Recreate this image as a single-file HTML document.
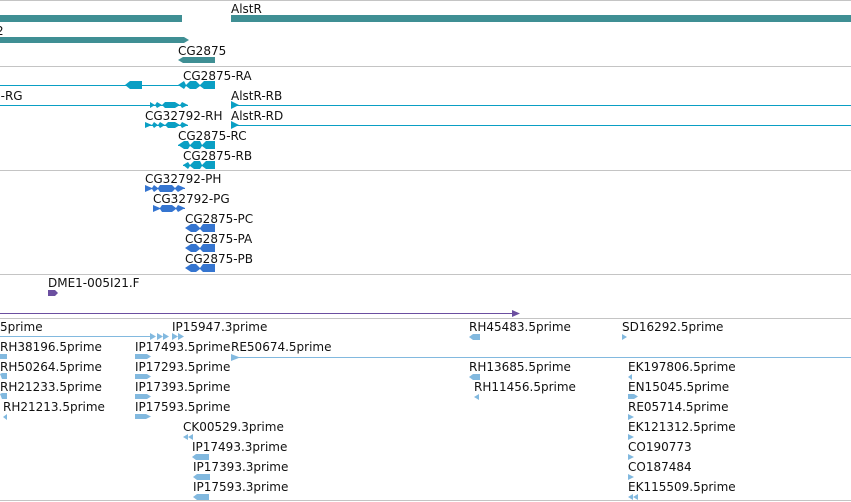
<!DOCTYPE html>
<html><head><meta charset="utf-8"><style>
html,body{margin:0;padding:0;background:#fff;}
body{width:851px;height:502px;position:relative;overflow:hidden;font-family:"DejaVu Sans","Liberation Sans",sans-serif;font-size:12px;color:#111;}
.t{position:absolute;line-height:12px;white-space:nowrap;margin-top:1px;}
.h{position:absolute;left:0;width:851px;height:1px;background:#c4c4c4;}
svg{position:absolute;left:0;top:0;}
</style></head><body>
<div class="h" style="top:0"></div>
<div class="h" style="top:66px"></div>
<div class="h" style="top:170px"></div>
<div class="h" style="top:274px"></div>
<div class="h" style="top:318px"></div>
<div class="h" style="top:500px"></div>

<svg width="851" height="502">
<g fill="#3f8f94">
<rect x="0" y="15" width="182" height="7"/>
<rect x="231" y="15" width="620" height="7"/>
<polygon points="0,37 184,37 189,40 184,43 0,43"/>
<polygon points="178,60 183,57 215,57 215,63 183,63"/>
</g>
<g fill="#0a9fc4" stroke="#0a9fc4">
<line x1="0" y1="85.5" x2="215" y2="85.5" stroke-width="1"/>
<polygon points="125,85 130,81 142,81 142,89 130,89" stroke="none"/>
<polygon points="178,85 184,81 186,85 190,81 196,81 200,85 204,81 215,81 215,89 204,89 200,86 196,89 190,89 186,86 184,89" stroke="none"/>
<line x1="0" y1="105.5" x2="188" y2="105.5"/>
<polygon points="150,102 155,105 157,102 162,105 165,102 175,102 180,105 182,102 188,105 182,108 180,105 175,108 165,108 162,105 157,108 155,105 150,108" stroke="none"/>
<line x1="231" y1="105.5" x2="851" y2="105.5"/>
<polygon points="231,101 239,105 231,109" stroke="none"/>
<line x1="145" y1="125.5" x2="188" y2="125.5"/>
<polygon points="145,122 152,125 154,122 158,125 160,122 165,125 168,122 175,122 180,125 182,122 188,125 182,128 180,125 175,128 168,128 165,125 160,128 158,125 154,128 152,125 145,128" stroke="none"/>
<line x1="231" y1="125.5" x2="851" y2="125.5"/>
<polygon points="231,121 239,125 231,129" stroke="none"/>
<line x1="178" y1="145.5" x2="215" y2="145.5"/>
<polygon points="178,145 184,141 188,141 190,145 194,141 200,141 202,145 206,141 215,141 215,149 206,149 202,146 200,149 194,149 190,146 188,149 184,149" stroke="none"/>
<line x1="183" y1="165.5" x2="215" y2="165.5"/>
<polygon points="183,165 188,162 190,165 194,161 200,161 202,165 206,161 215,161 215,169 206,169 202,166 200,169 194,169 190,166 188,169" stroke="none"/>
</g>
<g fill="#3575d0" stroke="#3575d0">
<line x1="145" y1="188.5" x2="185" y2="188.5"/>
<polygon points="145,185 152,188 154,185 158,188 160,185 165,185 172,185 175,188 178,185 185,188 178,192 175,189 172,192 165,192 160,192 158,189 154,192 152,189 145,192" stroke="none"/>
<line x1="153" y1="208.5" x2="185" y2="208.5"/>
<polygon points="153,205 160,208 162,205 166,205 172,205 176,208 178,205 185,208 178,212 176,209 172,212 166,212 162,212 160,209 153,212" stroke="none"/>
<polygon points="185,228 191,224 196,224 200,228 203,224 215,224 215,232 203,232 200,229 196,232 191,232" stroke="none"/>
<polygon points="185,248 191,244 196,244 200,248 203,244 215,244 215,252 203,252 200,249 196,252 191,252" stroke="none"/>
<polygon points="185,268 191,264 196,264 200,268 203,264 215,264 215,272 203,272 200,269 196,272 191,272" stroke="none"/>
</g>
<g fill="#6b4fa0">
<polygon points="48,290 55,290 58,293 55,296 48,296"/>
<rect x="0" y="313" width="512" height="1"/>
<polygon points="512,310 520,313.5 512,317"/>
</g>
<g fill="#82b9df" stroke="#82b9df">
<line x1="0" y1="336.5" x2="150" y2="336.5"/>
<polygon points="150,333 156,336.5 150,340" stroke="none"/>
<polygon points="157,333 163,336.5 157,340" stroke="none"/>
<polygon points="163,333 169,336.5 163,340" stroke="none"/>
<polygon points="172,333 178,336.5 172,340" stroke="none"/>
<polygon points="178,333 184,336.5 178,340" stroke="none"/>
<line x1="231" y1="357.5" x2="851" y2="357.5"/>
<polygon points="231,354 240,357.5 231,361" stroke="none"/>
<polygon points="469,337 473,334 480,334 480,340 473,340" stroke="none"/>
<polygon points="622,334 627,337 622,340" stroke="none"/>
<rect x="0" y="354" width="7" height="5" stroke="none"/>
<polygon points="135,354 147,354 151,356.5 147,359 135,359" stroke="none"/>
<polygon points="0,374 2,373 7,373 7,379 2,379" stroke="none"/>
<polygon points="135,374 147,374 151,376.5 147,379 135,379" stroke="none"/>
<polygon points="469,377 473,374 480,374 480,380 473,380" stroke="none"/>
<polygon points="628,377 632,374 632,380" stroke="none"/>
<polygon points="0,394 2,393 7,393 7,399 2,399" stroke="none"/>
<polygon points="135,394 147,394 151,396.5 147,399 135,399" stroke="none"/>
<polygon points="474,397 479,394 479,400" stroke="none"/>
<polygon points="628,394 634,394 638,396.5 634,399 628,399" stroke="none"/>
<polygon points="3,417 7,414 7,420" stroke="none"/>
<polygon points="135,414 146,414 151,416.5 146,419 135,419" stroke="none"/>
<polygon points="628,414 634,417 628,420" stroke="none"/>
<polygon points="183,437 188,434 188,437 193,434 193,440 188,437 188,440" stroke="none"/>
<polygon points="628,434 634,437 628,440" stroke="none"/>
<polygon points="192,457 196,454 209,454 209,460 196,460" stroke="none"/>
<polygon points="628,454 634,457 628,460" stroke="none"/>
<polygon points="193,477 197,474 210,474 210,480 197,480" stroke="none"/>
<polygon points="628,474 634,477 628,480" stroke="none"/>
<polygon points="193,497 197,494 209,494 209,500 197,500" stroke="none"/>
<polygon points="628,497 633,494 633,497 638,494 638,500 633,497 633,500" stroke="none"/>
</g>
</svg>

<div class="t" style="left:231px;top:2px">AlstR</div>
<div class="t" style="left:-4px;top:24px">2</div>
<div class="t" style="left:178px;top:44px">CG2875</div>
<div class="t" style="left:183px;top:69px">CG2875-RA</div>
<div class="t" style="left:-7px;top:89px">2-RG</div>
<div class="t" style="left:231px;top:89px">AlstR-RB</div>
<div class="t" style="left:145px;top:109px">CG32792-RH</div>
<div class="t" style="left:231px;top:109px">AlstR-RD</div>
<div class="t" style="left:178px;top:129px">CG2875-RC</div>
<div class="t" style="left:183px;top:149px">CG2875-RB</div>
<div class="t" style="left:145px;top:172px">CG32792-PH</div>
<div class="t" style="left:153px;top:192px">CG32792-PG</div>
<div class="t" style="left:185px;top:212px">CG2875-PC</div>
<div class="t" style="left:185px;top:232px">CG2875-PA</div>
<div class="t" style="left:185px;top:252px">CG2875-PB</div>
<div class="t" style="left:48px;top:276px">DME1-005I21.F</div>

<div class="t" style="left:0;top:320px">5prime</div>
<div class="t" style="left:172px;top:320px">IP15947.3prime</div>
<div class="t" style="left:469px;top:320px">RH45483.5prime</div>
<div class="t" style="left:622px;top:320px">SD16292.5prime</div>

<div class="t" style="left:0;top:340px">RH38196.5prime</div>
<div class="t" style="left:135px;top:340px">IP17493.5prime</div>
<div class="t" style="left:231px;top:340px">RE50674.5prime</div>

<div class="t" style="left:0;top:360px">RH50264.5prime</div>
<div class="t" style="left:135px;top:360px">IP17293.5prime</div>
<div class="t" style="left:469px;top:360px">RH13685.5prime</div>
<div class="t" style="left:628px;top:360px">EK197806.5prime</div>

<div class="t" style="left:0;top:380px">RH21233.5prime</div>
<div class="t" style="left:135px;top:380px">IP17393.5prime</div>
<div class="t" style="left:474px;top:380px">RH11456.5prime</div>
<div class="t" style="left:628px;top:380px">EN15045.5prime</div>

<div class="t" style="left:3px;top:400px">RH21213.5prime</div>
<div class="t" style="left:135px;top:400px">IP17593.5prime</div>
<div class="t" style="left:628px;top:400px">RE05714.5prime</div>

<div class="t" style="left:183px;top:420px">CK00529.3prime</div>
<div class="t" style="left:628px;top:420px">EK121312.5prime</div>
<div class="t" style="left:192px;top:440px">IP17493.3prime</div>
<div class="t" style="left:628px;top:440px">CO190773</div>
<div class="t" style="left:193px;top:460px">IP17393.3prime</div>
<div class="t" style="left:628px;top:460px">CO187484</div>
<div class="t" style="left:193px;top:480px">IP17593.3prime</div>
<div class="t" style="left:628px;top:480px">EK115509.5prime</div>
</body></html>
